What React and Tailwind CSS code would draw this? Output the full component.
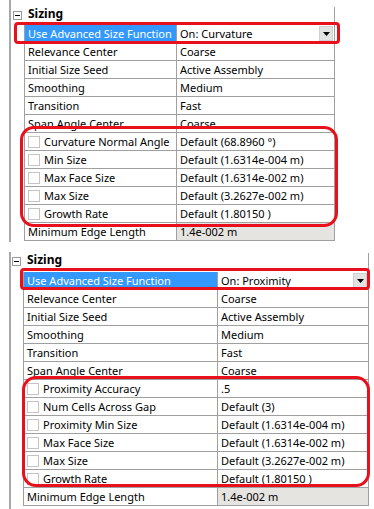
const line = 'border-[#a0a0a0]';

const Check = () => (
  <span className="w-[12px] h-[12px] border border-[#c4c4c4] bg-white shrink-0 mr-[4px]" />
);

const Drop = () => (
  <span className="ml-auto mr-[1px] w-[14px] h-[15px] bg-[#e2e2e2] border border-[#d0d0d0] flex items-center justify-center">
    <svg width="7" height="4" viewBox="0 0 7 4">
      <path d="M0 0h7L3.5 4z" fill="#000" />
    </svg>
  </span>
);

const Row = ({ row, nameW }) => (
  <div className={`flex h-[18px] border-b ${line}`}>
    <div
      className={`${nameW} shrink-0 flex items-center pl-[3px] border-r ${line} whitespace-nowrap overflow-hidden ${
        row.selected ? 'bg-[#3399ff] text-white' : ''
      }`}
    >
      {row.check && <Check />}
      {row.name}
    </div>
    <div
      className={`flex-1 flex items-center pl-[3px] whitespace-nowrap overflow-hidden ${
        row.shaded ? 'bg-[#e6e4e1]' : ''
      }`}
    >
      {row.value}
      {row.drop && <Drop />}
    </div>
  </div>
);

const Minus = () => (
  <span className="w-[9px] h-[9px] border border-[#9a9a9a] bg-white flex items-center justify-center shrink-0">
    <span className="w-[5px] h-[1px] bg-black" />
  </span>
);

const topRows = [
  { name: 'Use Advanced Size Function', value: 'On: Curvature', selected: true, drop: true },
  { name: 'Relevance Center', value: 'Coarse' },
  { name: 'Initial Size Seed', value: 'Active Assembly' },
  { name: 'Smoothing', value: 'Medium' },
  { name: 'Transition', value: 'Fast' },
  { name: 'Span Angle Center', value: 'Coarse' },
  { name: 'Curvature Normal Angle', value: 'Default (68.8960 °)', check: true },
  { name: 'Min Size', value: 'Default (1.6314e-004 m)', check: true },
  { name: 'Max Face Size', value: 'Default (1.6314e-002 m)', check: true },
  { name: 'Max Size', value: 'Default (3.2627e-002 m)', check: true },
  { name: 'Growth Rate', value: 'Default (1.80150 )', check: true },
  { name: 'Minimum Edge Length', value: '1.4e-002 m', shaded: true },
];

const bottomRows = [
  { name: 'Use Advanced Size Function', value: 'On: Proximity', selected: true, drop: true },
  { name: 'Relevance Center', value: 'Coarse' },
  { name: 'Initial Size Seed', value: 'Active Assembly' },
  { name: 'Smoothing', value: 'Medium' },
  { name: 'Transition', value: 'Fast' },
  { name: 'Span Angle Center', value: 'Coarse' },
  { name: 'Proximity Accuracy', value: '.5', check: true },
  { name: 'Num Cells Across Gap', value: 'Default (3)', check: true },
  { name: 'Proximity Min Size', value: 'Default (1.6314e-004 m)', check: true },
  { name: 'Max Face Size', value: 'Default (1.6314e-002 m)', check: true },
  { name: 'Max Size', value: 'Default (3.2627e-002 m)', check: true },
  { name: 'Growth Rate', value: 'Default (1.80150 )', check: true },
  { name: 'Minimum Edge Length', value: '1.4e-002 m', shaded: true },
];

export default function App() {
  return (
    <div
      className="relative w-[374px] h-[509px] bg-white overflow-hidden text-[11px] text-black leading-none"
      style={{ fontFamily: '"Noto Sans", "Open Sans", sans-serif' }}
    >
      {/* curvature panel */}
      <div className="flex h-[242px]">
        <div className="w-[9px]" />
        <div className="w-[2px] bg-[#a9a9a9]" />
        <div className="w-[324px] flex flex-col">
          <div className="h-[25px] flex">
            <div className="flex-1 flex items-start pt-[11px] pl-[2px]">
              <Minus />
              <span className="ml-[6px] -mt-[3px] font-bold text-[12px]">Sizing</span>
            </div>
            <div className={`w-[1px] mt-[7px] border-r ${line}`} />
          </div>
          <div className={`ml-[13px] border-l border-r ${line}`}>
            {topRows.map((r) => (
              <Row key={r.name} row={r} nameW="w-[152px]" />
            ))}
          </div>
        </div>
      </div>

      {/* proximity panel */}
      <div className="flex h-[259px] mt-[8px]">
        <div className="w-[9px]" />
        <div className="w-[2px] mt-[2px] bg-[#a9a9a9]" />
        <div className="w-[358px] flex flex-col">
          <div className="h-[22px] flex">
            <div className="flex-1 flex items-start pt-[7px] pl-[1px]">
              <Minus />
              <span className="ml-[6px] -mt-[3px] font-bold text-[12px]">Sizing</span>
            </div>
            <div className={`w-[1px] mt-[3px] border-r ${line}`} />
          </div>
          <div className={`ml-[12px] border-l border-r ${line}`}>
            {bottomRows.map((r) => (
              <Row key={r.name} row={r} nameW="w-[194px]" />
            ))}
          </div>
        </div>
      </div>

      {/* red annotations */}
      <div className="absolute left-[14px] top-[22px] w-[326px] h-[22px] border-[3px] border-[#e8101c] rounded-[4px]" />
      <div className="absolute left-[20px] top-[126px] w-[318px] h-[101px] border-[3px] border-[#e8101c] rounded-[14px]" />
      <div className="absolute left-[20px] top-[268px] w-[350px] h-[22px] border-[3px] border-[#e8101c] rounded-[4px]" />
      <div className="absolute left-[22px] top-[376px] w-[348px] h-[111px] border-[3px] border-[#e8101c] rounded-[14px]" />
    </div>
  );
}
